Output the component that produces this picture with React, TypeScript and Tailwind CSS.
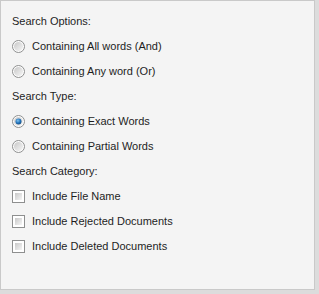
import React from "react";

function Radio({ checked }: { checked?: boolean }) {
  return (
    <svg width="13" height="13" viewBox="0 0 13 13" className="shrink-0">
      <defs>
        <linearGradient id={checked ? "rgc" : "rg"} x1="0" y1="0" x2="1" y2="1">
          <stop offset="0" stopColor="#c8c8c8" />
          <stop offset="1" stopColor="#f6f6f6" />
        </linearGradient>
        <radialGradient id="dot" cx="0.4" cy="0.35" r="0.7">
          <stop offset="0" stopColor="#7fc4f0" />
          <stop offset="0.6" stopColor="#1f6fb8" />
          <stop offset="1" stopColor="#174a7a" />
        </radialGradient>
      </defs>
      <circle cx="6.5" cy="6.5" r="6" fill="#fdfdfd" stroke="#8e8f8f" strokeWidth="1" />
      <circle cx="6.5" cy="6.5" r="4.5" fill={`url(#${checked ? "rgc" : "rg"})`} />
      {checked && <circle cx="6.5" cy="6.5" r="3" fill="url(#dot)" />}
    </svg>
  );
}

function Check() {
  return (
    <span className="w-[13px] h-[13px] shrink-0 border border-[#8e8f8f] bg-white p-[2px] flex">
      <span className="flex-1 bg-gradient-to-br from-[#c8c8c8] to-[#f6f6f6]" />
    </span>
  );
}

const font = { fontFamily: '"Liberation Sans", Arial, sans-serif' };

export default function App() {
  const row = "h-[25px] flex items-center";
  return (
    <div className="w-[319px] h-[294px] bg-[#dcdcdc] text-[11px] text-[#1e1e1e]" style={font}>
      <div className="w-[315px] h-[290px] bg-[#f4f4f4] border border-[#c9c9c9] pt-[8px] pl-[11px]">
        <div className={row}>Search Options:</div>
        <div className={`${row} gap-[7px]`}><Radio /><span>Containing All words (And)</span></div>
        <div className={`${row} gap-[7px]`}><Radio /><span>Containing Any word (Or)</span></div>
        <div className={row}>Search Type:</div>
        <div className={`${row} gap-[7px]`}><Radio checked /><span>Containing Exact Words</span></div>
        <div className={`${row} gap-[7px]`}><Radio /><span>Containing Partial Words</span></div>
        <div className={row}>Search Category:</div>
        <div className={`${row} gap-[7px]`}><Check /><span>Include File Name</span></div>
        <div className={`${row} gap-[7px]`}><Check /><span>Include Rejected Documents</span></div>
        <div className={`${row} gap-[7px]`}><Check /><span>Include Deleted Documents</span></div>
      </div>
    </div>
  );
}
